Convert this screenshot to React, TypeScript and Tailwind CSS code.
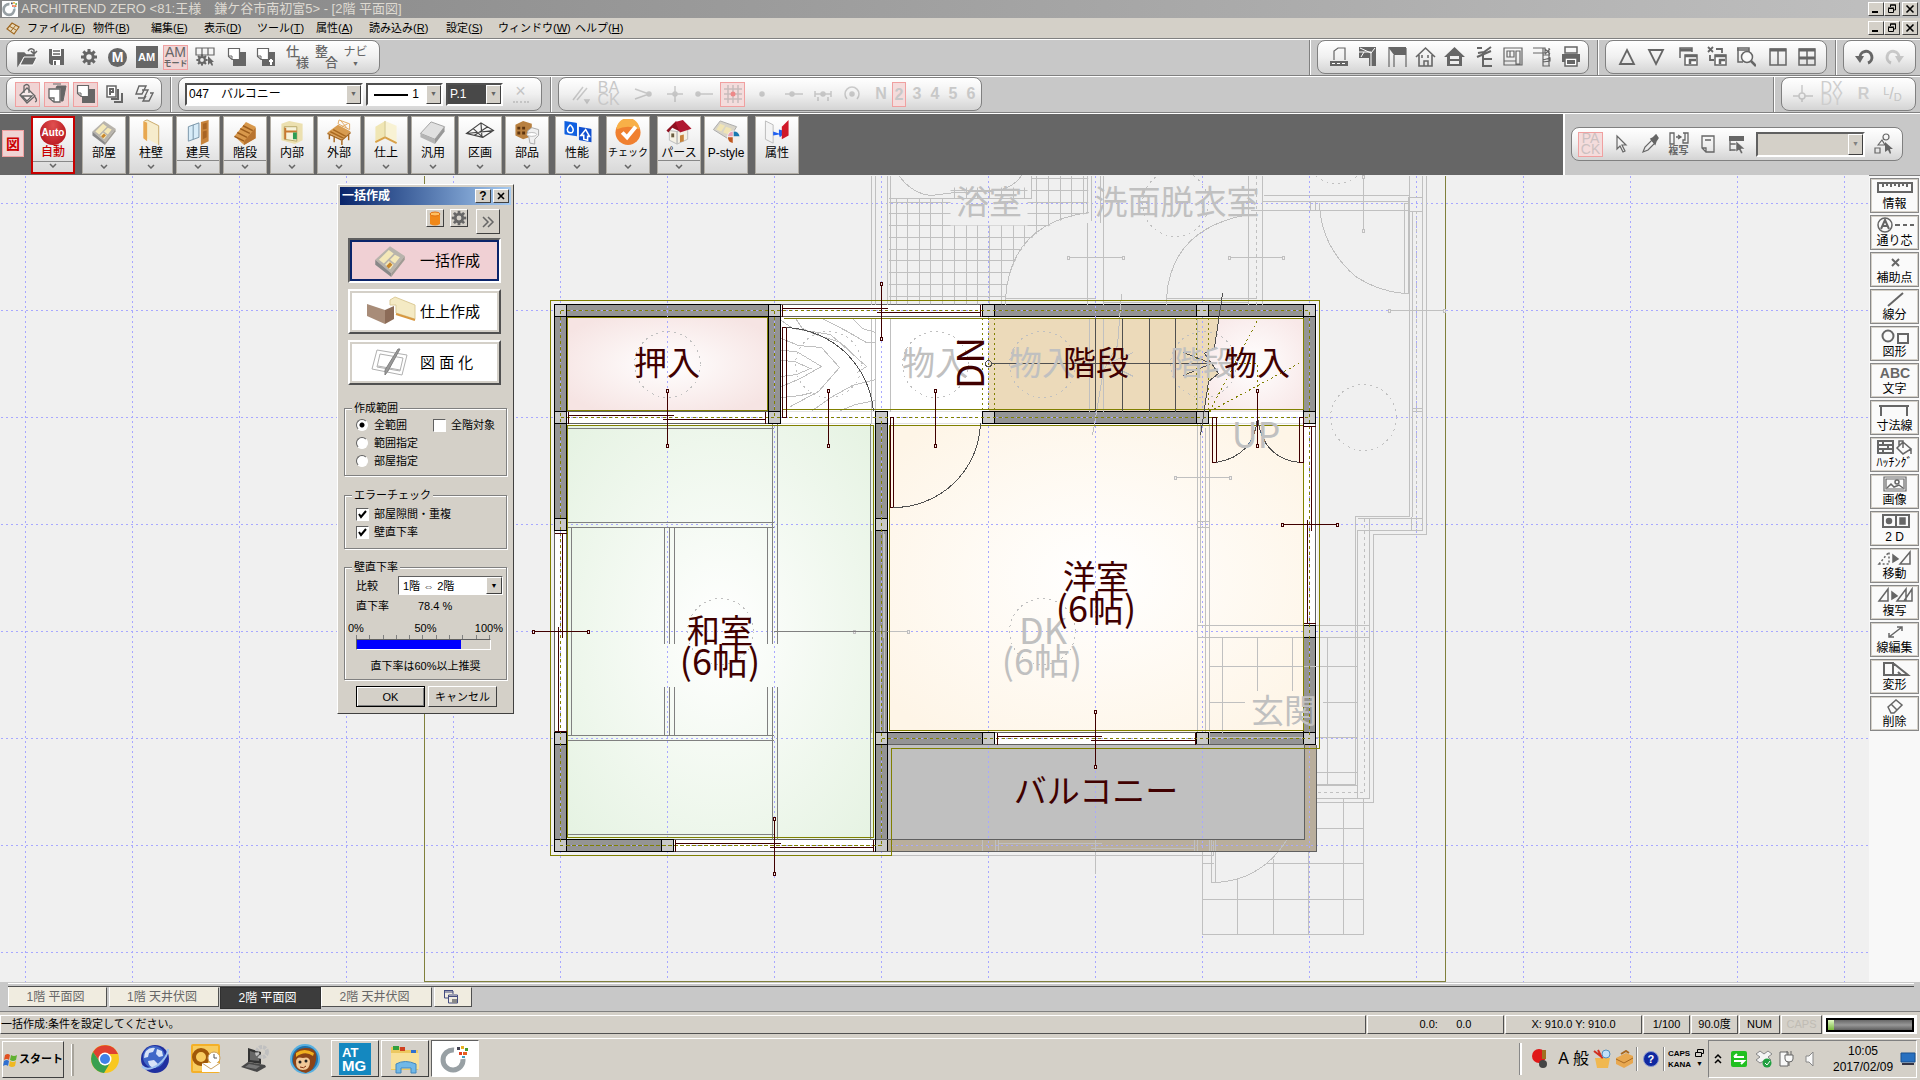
import React from "react";

type Kids = { children?: React.ReactNode };

/* ---------- shared bits ---------- */

const RAISED = "border border-t-white border-l-white border-r-[#404040] border-b-[#404040]";
const SUNKEN = "border border-t-[#606060] border-l-[#606060] border-r-white border-b-white";

function Svg({ w = 22, h = 22, children, className = "" }: Kids & { w?: number; h?: number; className?: string }) {
  return (
    <svg width={w} height={h} viewBox={`0 0 ${w} ${h}`} className={`shrink-0 ${className}`} fill="none" stroke="#666" strokeWidth="1.5" aria-hidden="true">
      {children}
    </svg>
  );
}

function Pill({ children, className = "" }: Kids & { className?: string }) {
  return (
    <div className={`flex h-[34px] items-center rounded-lg border border-[#808080] bg-linear-to-b from-white via-[#f0f0f0] to-[#d4d4d4] ${className}`}>
      {children}
    </div>
  );
}

function Tool({ label, children, on, faint }: Kids & { label: string; on?: boolean; faint?: boolean }) {
  return (
    <button
      aria-label={label}
      className={`flex w-[29px] shrink-0 justify-center ${faint ? "opacity-30" : ""}`}
    >
      <span className={`flex h-[25px] w-[25px] items-center justify-center ${on ? "border border-[#f0a0a0] bg-[#f0d4d4]" : ""}`}>{children}</span>
    </button>
  );
}

function Divider({ className = "" }: { className?: string }) {
  return <div className={`w-[2px] shrink-0 self-stretch border-l border-l-[#808080] bg-white ${className}`} />;
}

function Gap() {
  return <div className="w-[3px] shrink-0" />;
}

/* ---------- title and menu ---------- */

function WindowButtons() {
  const b = `flex h-[14px] w-4 items-center justify-center bg-[#d4d0c8] ${RAISED}`;
  return (
    <div className="ml-auto flex pr-[2px]">
      <button aria-label="最小化" className={b}>
        <svg width="10" height="10" aria-hidden="true"><path d="M1 8h6" stroke="#000" strokeWidth="2" /></svg>
      </button>
      <button aria-label="元に戻す" className={b}>
        <svg width="10" height="10" fill="none" stroke="#000" aria-hidden="true"><path d="M3.500 3V1h5v5H7M3 1h6" /><path d="M1.500 4.500h5v4h-5zM1 4h6" /></svg>
      </button>
      <button aria-label="閉じる" className={`ml-[2px] ${b}`}>
        <svg width="10" height="10" aria-hidden="true"><path d="M1.500 1.500l7 7M8.500 1.500l-7 7" stroke="#000" strokeWidth="1.600" /></svg>
      </button>
    </div>
  );
}

function AppMark({ size = 16 }: { size?: number }) {
  return (
    <svg width={size} height={size} viewBox="0 0 30 30" fill="none" aria-hidden="true" className="shrink-0">
      <path d="M14 6A10 10 0 1 0 23 15" stroke="#98a0a4" strokeWidth="5" />
      <path d="M17 3h3v3h-3z" fill="#445" /><path d="M21 2h3v3h-3z" fill="#e8b020" /><path d="M25 4h3v3h-3z" fill="#4a9a30" />
      <path d="M19 8h3v3h-3z" fill="#e04020" /><path d="M23 8h4v3h-4z" fill="#e86020" /><path d="M22 12h3v2h-3z" fill="#40a0c0" />
    </svg>
  );
}

const MENUS: [string, string, string][] = [
  ["ファイル", "F", "w-[66px]"], ["物件", "B", "w-[58px]"], ["編集", "E", "w-[53px]"], ["表示", "D", "w-[53px]"], ["ツール", "T", "w-[59px]"],
  ["属性", "A", "w-[53px]"], ["読み込み", "R", "w-[77px]"], ["設定", "S", "w-[52px]"], ["ウィンドウ", "W", "w-[77px]"], ["ヘルプ", "H", "w-[60px]"],
];

function TitleAndMenu() {
  return (
    <>
      <header className="flex h-[18px] items-center bg-linear-to-r from-[#848484] to-[#c0c0c0]">
        <span className="ml-[2px] flex h-4 w-4 bg-white"><AppMark /></span>
        <h1 className="ml-[3px] text-[13px] leading-4 whitespace-pre text-[#dedad2]">ARCHITREND ZERO &lt;81:王様　鎌ケ谷市南初富5&gt; - [2階 平面図]</h1>
        <WindowButtons />
      </header>
      <nav className="flex h-5 items-center bg-[#d4d0c8]">
        <Svg w={14} h={14} className="mr-[7px] ml-[6px]">
          <path d="M1 8L6 2l7 4-5 7z" fill="#e8d8b8" stroke="#a06820" strokeWidth="1.200" /><path d="M5 10l5-6M3 5l7 4" stroke="#a06820" strokeWidth="1" />
        </Svg>
        {MENUS.map(([name, key, w]) => (
          <button key={key} className={`text-left text-[11px] leading-4 whitespace-nowrap ${w}`}>
            {name}(<u>{key}</u>)
          </button>
        ))}
        <WindowButtons />
      </nav>
    </>
  );
}

/* ---------- toolbar rows ---------- */

function Pages({ pin }: { pin?: boolean }) {
  return (
    <Svg w={20} h={20}>
      <path d="M8 5h11v14H6v-6h2z" fill="#666" stroke="none" />
      <path d="M1.500 1.500h11v11H5l-3.500-3z" fill="#fff" strokeWidth="1.200" /><path d="M5 12V9H2" strokeWidth="1" />
      {pin && <path d="M15 12v6M13 14h4" stroke="#fff" strokeWidth="2" />}
    </Svg>
  );
}

function GearShape({ c = 9, s = 1 }: { c?: number; s?: number }) {
  return (
    <g transform={`translate(${c} ${c}) scale(${s})`} stroke="#666">
      <circle r="4.200" strokeWidth="3" />
      {[0, 45, 90, 135, 180, 225, 270, 315].map((a) => <path key={a} d="M0-5V-8" strokeWidth="3" transform={`rotate(${a})`} />)}
    </g>
  );
}

function RowOne() {
  return (
    <div className="flex h-[37px] items-start border-t border-b border-t-white border-b-[#808080] bg-[#c8c8c8]">
      <Pill className="ml-[6px] w-[374px] pl-[6px]">
        <Tool label="開く"><Svg><path d="M1 19V7h6l2 2h8v2H6z" fill="#666" /><path d="M3 19l4-8h13l-4 8z" fill="#666" stroke="#fff" strokeWidth="1" /><path d="M11 5q3-4 6-1v3M14 5l3 3 3-3" /></Svg></Tool>
        <Tool label="保存"><Svg w={18} h={18}><path d="M1 1h15v16H3l-2-2z" fill="#666" stroke="none" /><path d="M4 1h9v7H4zM5 12h7v5H5z" fill="#fff" stroke="none" /><path d="M5 3h7M5 6h7" /><path d="M6 13h2v4H6z" fill="#666" stroke="none" /></Svg></Tool>
        <Gap />
        <Tool label="設定"><Svg w={18} h={18}><GearShape /></Svg></Tool>
        <Tool label="M"><span className="flex h-[19px] w-[19px] items-center justify-center rounded-full bg-[#666] text-sm leading-none font-bold text-white">M</span></Tool>
        <Tool label="AM"><span className="flex h-[22px] w-[22px] items-center justify-center bg-[#666] text-[11px] font-bold text-white">AM</span></Tool>
        <Tool label="AMモード" on><span className="flex flex-col items-center text-[#666]"><b className="text-sm leading-3 font-normal">AM</b><b className="text-[8px] leading-[11px] font-bold whitespace-nowrap">モード</b></span></Tool>
        <Tool label="構成"><Svg w={20} h={20}><path d="M1 1h18v7H1zM7 1v7M13 1v7" strokeWidth="1.200" /><g transform="translate(1 7)"><GearShape c={6} s={0.700} /></g><path d="M13 10v9l2-2 2 3 1-1-1-3h2z" fill="#666" stroke="none" transform="translate(0 -1)" /></Svg></Tool>
        <Gap />
        <Tool label="ページ"><Pages /></Tool>
        <Tool label="ページ照明"><Pages pin /></Tool>
        <Gap />
        {[["仕", "様"], ["整", "合"]].map(([a, b]) => (
          <button key={a} className="flex w-[29px] shrink-0 flex-col px-[3px] text-[13px] leading-[11px] font-medium text-[#666]">
            <span className="self-start">{a}</span><span className="self-end">{b}</span>
          </button>
        ))}
        <button className="flex w-[29px] shrink-0 flex-col items-center text-xs leading-[13px] text-[#666]"><span>ナビ</span><span className="text-[7px] leading-[10px]">▼</span></button>
      </Pill>
      <Divider className="mr-[6px] ml-auto" />
      <Pill className="w-[272px] pl-[6px]">
        <Tool label="屋根"><Svg w={20}><path d="M5 14V5l4-3h7v12" strokeWidth="1.200" /><path d="M1 15h18v5H1z" fill="#666" stroke="none" /><path d="M3 17.500h14" stroke="#fff" strokeDasharray="3 2" strokeWidth="1" /></Svg></Tool>
        <Tool label="伏図"><Svg w={20}><path d="M1 1h17v19h-7v-8H1z" fill="#666" stroke="none" /><path d="M1 6h12v14M2 2l11 5 4-5M3 11l3-5" stroke="#fff" strokeWidth="1" /></Svg></Tool>
        <Tool label="軒"><Svg w={20}><path d="M1 1h18v8H7z" fill="#666" stroke="none" /><path d="M2 2v19M7 9v12M19 2v19" strokeWidth="1.200" /></Svg></Tool>
        <Tool label="立面図"><Svg><path d="M1 11l9.500-9L20 11M4 9v11h13V9" strokeWidth="1.600" /><path d="M9 20v-5h4v5M7 9v3M13 9v3" /></Svg></Tool>
        <Tool label="外観"><Svg><path d="M0 11L10.500 1 21 11h-3v9H3v-9z" fill="#666" stroke="none" /><path d="M6 10h9v3H6zM6 15h9v3H6z" fill="#eee" stroke="none" /></Svg></Tool>
        <Tool label="断面図"><Svg w={20}><path d="M3 2h5M4 7l6-1L17 1M3 11l14-6M9 6v15M9 13h9M9 20h9" strokeWidth="2" /></Svg></Tool>
        <Tool label="平面図"><Svg w={20}><path d="M1 2h18v17H1zM4 5h7v6H4zM7 5v6M13 5h4v13h-4zM1 15h12" strokeWidth="1.200" /></Svg></Tool>
        <Tool label="詳細図"><Svg w={20}><path d="M1 2h12v5H1M11 2v18M17 2v18M13 3l5 5M18 3l-5 5M11 9h7M11 14l7-2v3l-7 1v4h7" strokeWidth="1.200" /></Svg></Tool>
        <Tool label="印刷"><Svg w={20}><path d="M4 1h12v6H4z" strokeWidth="1.500" /><path d="M1 8h18v8H1z" fill="#666" stroke="none" /><path d="M4 12h12v8H4z" fill="#fff" strokeWidth="1.500" /><path d="M6 14h8v4H6z" fill="#666" stroke="none" /></Svg></Tool>
      </Pill>
      <Divider className="mr-[6px] ml-[8px]" />
      <Pill className="w-[222px] pl-[6px]">
        <Tool label="上へ"><Svg w={18}><path d="M9 4l7 14H2z" strokeWidth="1.800" /></Svg></Tool>
        <Tool label="下へ"><Svg w={18}><path d="M9 18l7-14H2z" strokeWidth="1.800" /></Svg></Tool>
        <Gap />
        <Tool label="ウィンドウ"><Svg w={20}><path d="M2 12V2h12v4" /><path d="M2 4h12" strokeWidth="3" /><path d="M7 9h12v10H7z" fill="#fff" /><path d="M7 10h12M12 18v-4h6" strokeWidth="2.500" /></Svg></Tool>
        <Tool label="閉じる"><Svg w={20}><path d="M1 1l5 5M6 1L1 6M9 3h6v4M3 9v5h4" strokeWidth="1.800" /><path d="M8 9h11v10H8z" fill="#fff" /><path d="M8 10h11M13 18v-4h5" strokeWidth="2.500" /></Svg></Tool>
        <Tool label="検索"><Svg w={20}><path d="M1 2h12v4M1 4h12M2 2v14h5" /><circle cx="11" cy="11" r="5.500" fill="#fff" fillOpacity=".6" /><path d="M15 15l5 5" strokeWidth="2.500" /></Svg></Tool>
        <Gap />
        <Tool label="左右分割"><Svg w={18} h={20}><path d="M1 2h16v16H1zM9 2v16" /><path d="M1 3h16" strokeWidth="3" /></Svg></Tool>
        <Tool label="四分割"><Svg w={18} h={20}><path d="M1 2h16v16H1zM9 2v16" /><path d="M1 3h16M1 11h16" strokeWidth="3" /></Svg></Tool>
      </Pill>
      <Divider className="mr-[6px] ml-[8px]" />
      <Pill className="mr-1 w-[73px] pl-[6px]">
        <Tool label="元に戻す"><Svg w={20}><path d="M5 12A6 6 0 1 1 13 17" strokeWidth="3" /><path d="M0 10h9l-4 7z" fill="#666" stroke="none" /></Svg></Tool>
        <Tool label="やり直し" faint><Svg w={20}><path d="M15 12A6 6 0 1 0 7 17" strokeWidth="3" /><path d="M20 10h-9l4 7z" fill="#666" stroke="none" /></Svg></Tool>
      </Pill>
    </div>
  );
}

function Drop({ label, width, value, dark, children }: Kids & { label: string; width: string; value: string; dark?: boolean }) {
  return (
    <span className={`relative flex h-[23px] border-2 border-t-[#505050] border-l-[#505050] border-r-white border-b-white ${width}`}>
      <select aria-label={label} className={`w-full appearance-none pl-[2px] text-xs leading-4 outline-none ${dark ? "bg-[#484848] pl-3 text-white" : "bg-white text-black"} ${children ? "text-right pr-[22px]" : ""}`}>
        <option>{value}</option>
      </select>
      {children}
      <span className={`pointer-events-none absolute inset-y-0 right-0 flex w-[15px] items-center justify-center bg-[#d4d0c8] text-[7px] text-[#666] ${RAISED}`}>▼</span>
    </span>
  );
}

function RowTwo() {
  return (
    <div className="flex h-[37px] items-start border-t border-b border-t-white border-b-[#808080] bg-[#c8c8c8]">
      <Pill className="ml-[6px] w-[156px] pl-[6px]">
        <Tool label="塗り" on><Svg w={20}><path d="M9 5l8 8-8 7-7-8z" fill="#fff" fillOpacity=".5" strokeWidth="1.300" /><path d="M6 10V3q3-3 5 0v7M4 13h10l-5 5zM17 14q3 4 0 5" strokeWidth="1.300" /></Svg></Tool>
        <Tool label="用紙" on><Svg w={20}><path d="M6 1h8M10 3h9l-3 15h-2V5h-5z" fill="#666" strokeWidth="1" /><path d="M2 6h11v13H7l-5-4z" fill="#fff" strokeWidth="1.300" /><path d="M7 19v-4H2" strokeWidth="1.300" /></Svg></Tool>
        <Tool label="ページ重ね" on><Pages /></Tool>
        <Tool label="部品"><Svg w={20} h={20}><path d="M2 2h9v11H2z" fill="#fff" /><path d="M5 11V5h3v3H5M13 5v10H6M17 9v9H9" strokeWidth="2" /></Svg></Tool>
        <Tool label="階層"><Svg w={20} h={20}><path d="M5 2h7l-4 8H2zM8 6h6l-4 8H4M16 9h3l-4 8H9l3-5" strokeWidth="1.400" /></Svg></Tool>
      </Pill>
      <Divider className="mr-[6px] ml-[8px]" />
      <Pill className="w-[364px] gap-[3px] px-[6px]">
        <Drop label="要素" width="w-[178px]" value="047　バルコニー" />
        <Drop label="線幅" width="w-[77px]" value="1"><span className="pointer-events-none absolute top-[9px] left-[6px] h-[2px] w-[34px] bg-black" /></Drop>
        <Drop label="ペン" width="w-[57px]" value="P.1" dark />
        <button aria-label="解除" className="flex flex-1 flex-col items-center text-lg leading-3 text-[#c4c4c4]">×<span className="mt-1 w-4 border-t-2 border-dotted border-[#c4c4c4]" /></button>
      </Pill>
      <Divider className="mr-[6px] ml-[8px]" />
      <Pill className="w-[424px] pl-[6px]">
        <Tool label="平行" faint><Svg w={20}><path d="M3 17L13 4M7 17L17 5M15 17h4l-2 3z" /></Svg></Tool>
        <button className="flex w-[29px] shrink-0 flex-col items-center text-base leading-3 text-[#c8c8c8]"><span>BA</span><span>CK</span></button>
        <span className="w-[5px] shrink-0" />
        <Tool label="端点" faint><Svg w={20}><path d="M2 6l14 5L2 16" /><circle cx="16" cy="11" r="2" fill="#666" /></Svg></Tool>
        <Gap />
        <Tool label="交点" faint><Svg w={20}><path d="M2 11h16M10 3v16" /><circle cx="10" cy="11" r="2" fill="#666" /></Svg></Tool>
        <Tool label="線端" faint><Svg w={20}><path d="M4 11h15" /><circle cx="4" cy="11" r="2" fill="#666" /></Svg></Tool>
        <button aria-label="グリッド" className="flex w-[29px] shrink-0 justify-center">
          <span className="flex h-[25px] w-[25px] items-center justify-center border border-[#f0a0a0] bg-[#f4dcdc]">
            <Svg w={20} h={20}><path d="M5 1v18M10 1v18M15 1v18M1 5h18M1 10h18M1 15h18" stroke="#c8bcbc" /><circle cx="10" cy="10" r="2.500" fill="#e88" stroke="none" /></Svg>
          </span>
        </button>
        <Tool label="点" faint><Svg w={20}><circle cx="10" cy="11" r="2" fill="#666" /></Svg></Tool>
        <Gap />
        <Tool label="中点" faint><Svg w={20}><path d="M1 11h18" /><circle cx="8" cy="11" r="2" fill="#666" /></Svg></Tool>
        <Tool label="間隔" faint><Svg w={20}><path d="M2 8v6M18 8v6M2 11h16M5 14v4M15 14v4" /><circle cx="10" cy="11" r="2" fill="#666" /></Svg></Tool>
        <Tool label="中心" faint><Svg w={20}><path d="M5 16A7 7 0 1 1 15 16" /><circle cx="10" cy="11" r="2" fill="#666" /></Svg></Tool>
        <div className="ml-2 flex gap-1 text-base font-bold text-[#c8c8c8]">
          {["N", "2", "3", "4", "5", "6"].map((n) => (
            <button key={n} className={`h-[25px] w-[14px] ${n === "2" ? "border border-[#f0a0a0] bg-[#f4dcdc]" : ""}`}>{n}</button>
          ))}
        </div>
      </Pill>
      <Divider className="mr-[6px] ml-auto" />
      <Pill className="mr-1 w-[135px] pl-[6px]">
        <Tool label="座標" faint><Svg w={20}><circle cx="9" cy="13" r="3" /><path d="M9 2v8M0 13h6M12 13h8M9 16v3" /></Svg></Tool>
        <button className="flex w-[29px] flex-col items-center text-base leading-3 text-[#cdcdcd]"><span>DX</span><span>DY</span></button>
        <Gap />
        <button className="w-[29px] text-base font-bold text-[#cdcdcd]">R</button>
        <button className="flex w-[29px] items-center justify-center text-[11px] leading-4 text-[#c4c4c4]"><span className="pb-[6px]">L</span><span className="text-base">/</span><span className="pt-[6px]">D</span></button>
      </Pill>
    </div>
  );
}

/* ---------- ribbon ---------- */

const ART: Record<string, React.ReactNode> = {
  room: <><path d="M3 13L15 2l12 8-11 14z" fill="#b8b4ac" /><path d="M6 13l8-8 4 3-8 8zM15 4l4 3M19 9l4 2-4 5-4-3zM11 17l3-3 4 3-3 4z" fill="#f4e8b8" /><path d="M12 18l3-3 2 2-3 3z" fill="#c8862c" /><path d="M3 13v4l13 10v-3z" fill="#888" /><path d="M27 10v3L16 27v-3z" fill="#a09c94" /></>,
  pillar: <><path d="M8 2l3-1 12 6v20L10 20z" fill="#f6eccc" /><path d="M7 2l4 2v19l-4-3z" fill="#e8a850" /><path d="M8 2l3-1 12 6v20" fill="none" stroke="#c8a868" /></>,
  joinery: <><path d="M5 8l11-4v15L5 23z" fill="#d8ecf8" stroke="#7894a8" /><path d="M10 6v15" stroke="#7894a8" /><path d="M18 3l8-2v22l-8 4z" fill="#c8843c" /><path d="M20 5l4-1v6l-4 1zM20 13l4-1v7l-4 2z" fill="#a86424" /></>,
  stairs: <><path d="M4 18L16 3l10 5v12L14 27z" fill="#d8984c" /><path d="M4 18l10 5M7 14l10 5M10 10l10 5M13 7l10 5" stroke="#9c5c1c" strokeWidth="1.500" /><path d="M14 23l12-14v11L14 27z" fill="#b87430" /></>,
  inner: <><path d="M4 5l8-3 14 3v17l-8 4-14-4z" fill="#ece0b0" /><path d="M7 8h13v15l-13-2z" fill="#f6f2da" stroke="#b8a868" /><path d="M8 13h12M8 9v12" stroke="#c87830" strokeWidth="2" /><path d="M16 14h4v7h-4z" fill="#2c9c54" /></>,
  outer: <><path d="M3 14L14 6l13 7-9 8z" fill="#d89c50" /><path d="M3 15l15 7 9-8M5 15v6M10 18v6M18 22v5M25 15v7M6 13l14 7M9 11l13 7" stroke="#a86820" strokeWidth="1.500" fill="none" /><path d="M14 5l12 6V5L15 1zM17 2l6 7M24 5l-6 3" stroke="#e0a860" fill="none" /></>,
  finish: <><path d="M4 8l10-6v17L4 25z" fill="#f0e6b4" /><path d="M14 2l12 5v18l-12-6z" fill="#f8f2d4" /><path d="M4 24l10-5 12 6" stroke="#d8a048" strokeWidth="2" fill="none" /><path d="M14 2v17" stroke="#cfc48c" /></>,
  general: <><path d="M2 15L13 3l14 5-10 13z" fill="#e0e0e0" stroke="#a0a0a0" /><path d="M2 15v4l15 7v-5z" fill="#b4b4b4" /><path d="M27 8v5L17 26v-5z" fill="#989898" /></>,
  area: <g fill="none" stroke="#444" strokeWidth="1.200"><path d="M1 15L16 4l13 8-11 7zM8 10l10 9M9 17L23 8M1 15l17 4M16 4l1 15M1 15l28-3" /></g>,
  parts: <><path d="M3 6l8-4 9 3v13l-9 3-8-4z" fill="#b88040" /><path d="M5 8h3v3H5zM10 8h3v3h-3zM5 13h3v3H5zM10 13h3v3h-3z" fill="#5c3410" /><path d="M16 12l4-3 7 2v6l-4 4v5l-5-1-1-6q-3-4-1-7z" fill="#f0f0f0" stroke="#aaa" /><ellipse cx="20" cy="16" rx="5" ry="2" fill="#fff" stroke="#bbb" /></>,
  perf: <><path d="M2 2l12 2q1 0 1 1v13l-12-2q-1 0-1-1z" fill="#1060e0" /><path d="M17 8l12 2q1 0 1 1v13l-12-2q-1 0-1-1z" fill="#1050d0" /><path d="M8 6q5 5 2 8-5 1-5-3 0-2 3-5M19 17l5-6 4 7h-2v4l-4-1v-4z" fill="none" stroke="#fff" strokeWidth="1.600" /></>,
  check: <><circle cx="15" cy="14" r="13" fill="#f08030" /><path d="M3 11a12 12 0 0 1 24 0q-12-6-24 0" fill="#f8b048" /><path d="M9 14l5 5 9-11" fill="none" stroke="#fff" strokeWidth="4" /></>,
  pers: <><path d="M5 12l8 1v13l-8-4zM13 13l11-3v11l-11 5z" fill="#f4f0e4" stroke="#bbb" /><path d="M2 12L12 2l4 11-8-4-4 5z" fill="#901020" /><path d="M11 3l8-2 9 9-12 4z" fill="#b01830" /><path d="M16 17l4-1v7l-4 1z" fill="#c8843c" /><path d="M7 15h3v4H7z" fill="#6a5c40" /></>,
  pstyle: <><path d="M2 11L9 2l17 6-8 13z" fill="#d8d4c8" stroke="#aaa" /><path d="M5 11l4-6 5 2-4 6zM15 8l6 2-3 6-6-2z" fill="#f0e4b4" /><circle cx="23" cy="19" r="7" fill="#f0eeec" /><path d="M23 18v-5a6 6 0 0 1 6 5z" fill="#1878b0" /><path d="M22 19v6a6 6 0 0 1-5-6z" fill="#c05820" /><path d="M22 18h-5a6 6 0 0 1 5-5z" fill="#e8a0b8" /></>,
  attr: <><path d="M3 2l8 4v19l-8-4z" fill="#f4f4f4" stroke="#bbb" /><path d="M11 13l6 2v-4l8 2-7 6-1-3-6 1z" fill="#2060f0" /><path d="M20 8l7-7v16l-7 4z" fill="#d01828" /></>,
};

const RIBBON: [string, string, string, boolean, boolean][] = [
  ["部屋", "room", "ml-[7px]", false, true], ["柱壁", "pillar", "ml-[3px]", false, true], ["建具", "joinery", "ml-[3px]", true, true], ["階段", "stairs", "ml-[3px]", true, true],
  ["内部", "inner", "ml-[3px]", false, true], ["外部", "outer", "ml-[3px]", false, true], ["仕上", "finish", "ml-[3px]", false, true], ["汎用", "general", "ml-[3px]", false, true],
  ["区画", "area", "ml-[3px]", false, true], ["部品", "parts", "ml-[3px]", false, true], ["性能", "perf", "ml-[6px]", false, true], ["チェック", "check", "ml-[7px]", false, true],
  ["パース", "pers", "ml-[7px]", true, true], ["P-style", "pstyle", "ml-[3px]", false, false], ["属性", "attr", "ml-[7px]", false, false],
];

function Chevron() {
  return <svg width="8" height="5" fill="none" stroke="#666" strokeWidth="1.500" className="absolute bottom-[4px]" aria-hidden="true"><path d="M1 1l3 3 3-3" /></svg>;
}

function Ribbon() {
  const card = "relative flex h-[58px] w-11 shrink-0 flex-col items-center bg-linear-to-b from-white via-[#eeeeee] to-[#d8d8d8]";
  return (
    <div className="flex h-[62px] border-t border-t-white bg-[#666]">
      <div className="flex pt-[2px]">
        <button className="mt-[14px] ml-[2px] flex h-[27px] w-[22px] items-center justify-center border border-[#f0a0a0] bg-[#f0d4d4] text-sm font-bold text-[#c00]">図</button>
        <button className={`${card} ml-[7px] border-2 border-[#c80000]`}>
          <span className="mt-[2px] flex h-[25px] w-[26px] items-center justify-center rounded-full bg-radial-[at_50%_20%] from-[#e05050] to-[#b00c14] text-[10px] font-bold text-white">Auto</span>
          <span className="text-xs leading-[15px] font-medium text-[#c80000]">自動</span>
          <span className="mt-px w-full border-t border-[#888]" />
          <Chevron />
        </button>
        {RIBBON.map(([label, art, ml, split, menu]) => (
          <button key={label} className={`${card} ${ml} border border-[#b0aca4] pt-[2px]`}>
            <svg width="30" height="27" viewBox="0 0 30 28" aria-hidden="true">{ART[art]}</svg>
            <span className={`whitespace-nowrap ${label.length === 4 ? "text-[10px] leading-[14px]" : "text-xs leading-[14px]"}`}>{label}</span>
            {split && <span className="w-full border-t border-[#888]" />}
            {menu && <Chevron />}
          </button>
        ))}
      </div>
      <div className="ml-auto flex w-[357px] border-l-2 border-l-white bg-[#c8c8c8] pt-[13px] pl-[6px]">
        <Pill className="w-[332px] pl-[6px]">
          <button className="flex h-[25px] w-[25px] flex-col items-center justify-center border border-[#f0a0a0] bg-[#f4dcdc] text-sm leading-[11px] text-[#ccc0c0]"><span>PA</span><span>CK</span></button>
          <Gap />
          <Tool label="選択"><Svg w={14} h={20}><path d="M3 2v13l3-3 3 6 2-1-3-6h4z" strokeWidth="1.200" /></Svg></Tool>
          <Tool label="スポイト"><Svg w={18} h={20}><path d="M2 18l2-5 7-7 3 3-7 7z" strokeWidth="1.200" /><path d="M10 5l2-1 3-3 2 3-2 3-1 3z" fill="#666" /></Svg></Tool>
          <button className="flex w-[29px] flex-col items-center text-[10px] leading-[11px] font-bold text-[#666]">
            <Svg w={22} h={13}><path d="M2 1h4v11H2zM15 1h5v10h-5v-3h2V1M8 5h5M10 3l3 2-3 2" strokeWidth="1.300" /></Svg><span>複写</span>
          </button>
          <Tool label="メモ"><Svg w={16} h={20}><path d="M2 2h12v16H6l-4-4zM5 6h6M2 14h4v4" strokeWidth="1.300" /></Svg></Tool>
          <Tool label="一覧"><Svg w={18} h={20}><path d="M1 2h15v5H1z" fill="#666" stroke="none" /><path d="M2 2v15M2 10h6M2 16h6" strokeWidth="1.300" /><path d="M8 7v11l3-2 2 4 2-1-2-4h4z" fill="#666" stroke="#fff" strokeWidth=".5" /></Svg></Tool>
          <span className="relative ml-[5px] flex h-[25px] w-[109px] border-2 border-t-[#606060] border-l-[#606060] border-r-white border-b-white">
            <select aria-label="選択条件" className="w-full appearance-none bg-[#d4d0c8] outline-none"><option></option></select>
            <span className={`pointer-events-none absolute inset-y-0 right-0 flex w-[15px] items-center justify-center bg-[#d4d0c8] text-[7px] text-[#808080] ${RAISED}`}>▼</span>
          </span>
          <span className="ml-1"><Tool label="図形選択"><Svg w={20} h={22}><circle cx="12" cy="4" r="3" strokeWidth="1.200" /><path d="M4 12l4-5 3 5zM1 15h5v5H1z" strokeWidth="1.200" /><path d="M11 9v10l3-2 2 4 1-1-1-4h3z" fill="#666" stroke="none" /></Svg></Tool></span>
        </Pill>
      </div>
    </div>
  );
}

/* ---------- drawing ---------- */

const GREY = "#c0c0c0";
const WINE = "#400000";
const OLIVE = "#808000";

function Txt({ x, y, s, under, size = 33 }: { x: number; y: number; s: string; under?: boolean; size?: number }) {
  return <text x={x} y={y} textAnchor="middle" fontSize={size} fill={under ? GREY : WINE} stroke="none">{s}</text>;
}

function Marks({ list, color }: { list: number[][]; color: string }) {
  return (
    <g stroke={color} fill="none">
      {list.map(([x1, y1, x2, y2], i) => (
        <g key={i}>
          <path d={`M${x1} ${y1}L${x2} ${y2}`} />
          <rect x={x1 - 1} y={y1 - 1} width="2" height="3" fill="#f4f0f0" /><rect x={x2 - 1} y={y2 - 1} width="2" height="3" fill="#f4f0f0" />
        </g>
      ))}
    </g>
  );
}

const WALLS = [
  [566, 304, 202, 12], [994, 304, 202, 12], [1208, 304, 95, 12], [554, 316, 12, 202], [554, 744, 12, 95], [768, 316, 12, 95],
  [994, 411, 202, 12], [875, 423, 12, 95], [875, 530, 12, 202], [875, 744, 12, 95], [1303, 316, 12, 95], [1303, 637, 12, 95],
  [887, 732, 95, 12], [1208, 732, 95, 12], [566, 839, 95, 12],
];
const OPENINGS = [[780, 304, 202, 12], [566, 411, 202, 12], [780, 411, 95, 12], [887, 411, 95, 12], [1208, 411, 95, 12], [554, 530, 12, 202], [1303, 423, 12, 202], [994, 732, 202, 12], [673, 839, 202, 12]];
const POSTS = [
  [554, 304], [768, 304], [982, 304], [1196, 304], [1303, 304], [554, 411], [768, 411], [875, 411], [982, 411], [1196, 411], [1303, 411],
  [554, 518], [875, 518], [1303, 625], [554, 732], [875, 732], [982, 732], [1196, 732], [1303, 732], [554, 839], [661, 839], [875, 839],
];
const TILE_X = [890, 896, 907, 919, 930, 942, 954, 966, 977, 989, 1001, 1013, 1024, 1036, 1048, 1060, 1071, 1083];
const TILE_Y = [178, 190, 202, 213, 225, 237, 249, 260, 272, 284, 296];

function FloorPlan() {
  return (
    <svg className="block h-full w-full" viewBox="0 175 1869 807" preserveAspectRatio="xMinYMin slice" fill="none" fontFamily="'Noto Sans CJK JP', sans-serif" role="img" aria-label="2階 平面図">
      <defs>
        <radialGradient id="pink" r=".6"><stop offset="0" stopColor="#fff" /><stop offset="1" stopColor="#f6e4e3" /></radialGradient>
        <radialGradient id="rose" r=".62"><stop offset="0" stopColor="#fff" /><stop offset="1" stopColor="#f8e8e8" /></radialGradient>
        <radialGradient id="green" r=".68"><stop offset="0" stopColor="#fff" /><stop offset="1" stopColor="#e6f3e3" /></radialGradient>
        <radialGradient id="cream" r=".64"><stop offset="0" stopColor="#fff" /><stop offset="1" stopColor="#fef5e7" /></radialGradient>
        <clipPath id="tiles"><path clipRule="evenodd" d="M888 198H1031V175H1088V213Q1008 225 1005 304H888ZM950 187H1027V225H950Z" /></clipPath>
      </defs>
      <g transform="translate(.5 .5)" shapeRendering="crispEdges">
        {/* rooms */}
        <rect x="554" y="304" width="762" height="440" fill="#fff" /><rect x="554" y="740" width="333" height="111" fill="#fff" />
        <rect x="567" y="317" width="200" height="94" fill="url(#pink)" />
        <rect x="1204" y="317" width="99" height="94" fill="url(#rose)" />
        <path d="M988 317H1218L1214 347 1204 353 1218 373 1208 381 1203 411H988Z" fill="#ecdaba" />
        <rect x="567" y="424" width="307" height="414" fill="url(#green)" />
        <rect x="888" y="424" width="415" height="307" fill="url(#cream)" />
        <rect x="887" y="744" width="429" height="107" fill="#b9ae9c" /><rect x="887" y="744" width="417" height="95" fill="#c0c0c0" />

        {WALLS.map((r, i) => <rect key={i} x={r[0]} y={r[1]} width={r[2]} height={r[3]} fill="#949494" stroke="#000" />)}
        {OPENINGS.map((r, i) => <rect key={i} x={r[0]} y={r[1]} width={r[2]} height={r[3]} fill="#fff" stroke={i === 2 || i === 3 || i === 4 ? "#e0e0e0" : "#606060"} />)}

        {/* grid */}
        <g stroke="#a8a8ff" strokeDasharray="2 3">
          {[25, 132, 239, 346, 453, 560, 667, 774, 881, 988, 1095, 1202, 1309, 1416, 1523, 1630, 1737, 1844].map((x) => <path key={x} d={`M${x} 175V981`} />)}
          {[203, 310, 417, 524, 631, 738, 845, 952].map((y) => <path key={y} d={`M0 ${y}H1869`} />)}
        </g>
        <path d="M424 175V981H1445V175" stroke="#80803c" />

        {/* lower storey */}
        <g stroke={GREY}>
          <path d="M871 175V304M875 175V304M887 175V304M890 175V300M1087 175V212M1091 175V220M1100 175V222M1103 175V304M1087 222V304M1248 175V304M1262 175V304M1409 175V516M1412 210V516M1422 175V530M1426 175V534" />
          <path d="M1031 175V198H888M1263 195H1409M1262 201H1409M1250 210H1409M1310 201V210M1315 201V210M1408 197H1422V211H1408Z" />
          <path d="M899 176Q912 193 930 195L955 192 980 191Q1010 192 1021 175" />
          <g clipPath="url(#tiles)">
            {TILE_X.map((x) => <path key={x} d={`M${x} 175V304`} />)}
            {TILE_Y.map((y) => <path key={y} d={`M888 ${y}H1089`} />)}
          </g>
          <path d="M1005 304V298H1095M1005 298Q1010 222 1089 212M1166 304V298H1256M1166 298Q1170 228 1248 214M1103 302H1248" />
          <path d="M1404 203H1408V293H1404ZM1319 203Q1320 245 1355 276 1378 291 1404 293M890 300H1103" />
          <path d="M1409 516H1355V784H1316M1422 530H1357V798M1426 534H1373V802H1316M1411 516V530M1369 518V798H1316M1422 518H1357" />
          <path d="M1197 423V745M1200 423V622M1205 427V745M1209 423V745M1197 521H1209M1197 527H1209M1197 625H1369M1197 637H1369" />
          <path d="M1222 637V732M1257 637V690M1292 637V690M1327 637V784M1209 666H1357M1209 702H1244M1322 702H1357M1209 737H1357M1316 772H1357M1316 785H1357M1411 408H1422M1411 411H1422" />
          <path d="M1202 851V934H1363V798M1237 878V934M1273 858V934M1308 851V934M1343 798V934M1316 828H1363M1202 863H1213M1265 863H1363M1202 899H1363M891 855H1213V840M1211 839V882H1215V839M1215 882Q1260 880 1286 840" />
          <path d="M982 839V851M995 839V851M998 839V851M1194 839V851M1197 839V851M1209 839V851M998 843H1101M1090 848H1194M871 530V732M884 533V732M880 625V732M883 530V637" />
          <path d="M890 317V411M871 317V423M875 317V423M1089 317V411M1103 317V411M1121 294L1117 345 1103 370 1098 400 1092 435M1107 363L1133 352M1107 363L1133 376M1197 317V411" />
          <path d="M781 320L792 328 830 334 866 366 857 372M795 318L802 328 815 334 840 342 852 353M822 318L845 330 866 342H875M852 318L862 328 875 332M781 338L798 345 821 347 839 367 818 391 790 406M781 350L796 351 821 366 800 378 781 386M781 360L794 361 810 368 796 374 781 376M781 397L800 395 812 392M812 410L832 396 852 385 875 379M840 410L855 404 875 400" />
          <g strokeDasharray="2 4">
            {[[667, 364], [828, 364], [935, 364], [1042, 364], [1203, 364], [1363, 417], [720, 631], [1042, 631], [1175, 203]].map(([x, y], i) => <circle key={i} cx={x} cy={y} r="33" />)}
            <circle cx="1336" cy="150" r="33" />
          </g>
          <path d="M1364 518V792H1316M1256 175V304M1416 210V530" strokeDasharray="3 3" />
        </g>
        <Marks color={GREY} list={[[1068, 257, 1123, 257], [1229, 257, 1283, 257], [1389, 310, 1444, 310], [1175, 477, 1230, 477], [1363, 176, 1363, 230], [854, 631, 908, 631]]} />
        <path d="M1095 839V873" stroke={GREY} />

        {/* tatami */}
        <g stroke="#808080">
          <path d="M567 428H773M567 522H773M567 527H773M567 735H773M567 740H773M567 834H773M870 423V838" />
          <path d="M571 527V735M664 527V643M664 686V735M669 527V643M669 686V735M674 527V643M674 686V735M767 527V643M767 686V735M772 423V643M772 686V839M777 423V643M777 686V839" />
          <path d="M773 631H887" />
        </g>

        {POSTS.map(([x, y]) => <rect key={`${x}-${y}`} x={x} y={y} width="12" height="12" fill="#c8c8c8" stroke="#000" />)}
        <path d="M887 744H1304V839H875M1316 744V851H875" stroke="#606060" />
        <g stroke={OLIVE}>
          <path d="M550 300H1319V748H891V855H550Z" />
          <path d="M567 317H767V410H567ZM783 318H982M782 409H1303V318H982M1303 318V409M567 425H873V837H567ZM889 425H1303V730H889Z" />
          <path d="M560 310H1309V738H881M560 310V845H881V417M560 417H1309M774 310V417M566 845H881" strokeDasharray="3 3" />
          <path d="M982 317V411M988 317V411M994 317V411M1196 317V411M1208 317V411M1209 411L1258 318M1209 411L1302 361M1218 363H1257V411" strokeDasharray="2 3" />
        </g>

        {/* windows, doors and stairs */}
        <path
          d="M782 304V316M980 304V316M782 308H887M876 312H980M568 411V423M765 411V423M568 415H673M662 419H765M554 533H566M562 533V637M558 626V731M554 731H566M675 839V851M873 839V851M675 843H780M769 847H873M997 732V744M1195 732V744M997 736H1101M1090 740H1195M1303 426H1315M1311 426V530M1307 519V623M1303 623H1315M782 327H786V417H782ZM890 417H893V507H890ZM1212 417H1216V462H1212ZM1299 417H1303V462H1299Z"
          stroke={WINE}
        />
        <g stroke="#505050">
          <path d="M786 327Q820 329 845 352 870 377 873 411M893 507A87 87 0 0 0 980 423M1216 462Q1254 455 1257 417Q1262 458 1299 462" />
          <path d="M1095 317V411M1122 317V411M1149 317V411M1175 317V411M991 363H1211M1183 352L1211 363 1183 375M1222 293L1214 347 1204 353 1218 373 1208 381 1200 435" />
          <circle cx="988" cy="363" r="3" />
        </g>
        <Marks color={WINE} list={[[667, 390, 667, 445], [828, 390, 828, 445], [935, 390, 935, 445], [881, 283, 881, 338], [1257, 390, 1257, 445], [1095, 711, 1095, 766], [774, 818, 774, 873], [533, 631, 588, 631], [1282, 524, 1337, 524]]} />
      </g>

      <Txt under x={989} y={214} s="浴室" /><Txt under x={1177} y={214} s="洗面脱衣室" />
      <Txt under x={935} y={375} s="物入" /><Txt under x={1042} y={375} s="物入" /><Txt under x={1203} y={375} s="階段" />
      <Txt under x={1256} y={448} s="UP" size={36} /><Txt under x={1043} y={644} s="DK" size={36} /><Txt under x={1042} y={675} s="(6帖)" size={36} />
      <Txt under x={1284} y={723} s="玄関" />
      <Txt x={667} y={375} s="押入" /><Txt x={1096} y={375} s="階段" /><Txt x={1257} y={375} s="物入" />
      <Txt x={720} y={643} s="和室" /><Txt x={720} y={675} s="(6帖)" size={36} />
      <Txt x={1096} y={589} s="洋室" /><Txt x={1096} y={622} s="(6帖)" size={36} />
      <Txt x={1096} y={803} s="バルコニー" />
      <text transform="translate(984 363) rotate(-90)" textAnchor="middle" fontSize="37" fill={WINE}>DN</text>
    </svg>
  );
}

/* ---------- dialog ---------- */

function Group({ title, className = "", children }: Kids & { title: string; className?: string }) {
  return (
    <fieldset className={`border border-[#808080] px-[11px] shadow-[1px_1px_0_#fff,inset_1px_1px_0_#fff] ${className}`}>
      <legend className="-ml-1 bg-[#d4d0c8] px-[2px] leading-3">{title}</legend>
      {children}
    </fieldset>
  );
}

function Radio({ label, checked }: { label: string; checked?: boolean }) {
  return (
    <label className="flex h-[18px] items-center gap-[6px]">
      <input type="radio" name="range" defaultChecked={checked} className={`h-3 w-3 appearance-none rounded-full bg-white checked:bg-[radial-gradient(#000_0_2px,#fff_3px)] ${SUNKEN}`} />
      {label}
    </label>
  );
}

function Check({ label, checked }: { label: string; checked?: boolean }) {
  return (
    <label className="relative flex h-[18px] items-center gap-[5px]">
      <input type="checkbox" defaultChecked={checked} className={`peer h-[13px] w-[13px] appearance-none bg-white ${SUNKEN}`} />
      <svg width="9" height="9" className="pointer-events-none absolute left-[2px] hidden peer-checked:block" fill="none" stroke="#000" strokeWidth="2" aria-hidden="true"><path d="M1 4l2 3 5-6" /></svg>
      {label}
    </label>
  );
}

function Dialog() {
  const big = "flex h-[45px] w-full items-center border-2 pl-4 text-[15px]";
  const rest = "border-t-white border-l-white border-r-[#505050] border-b-[#505050] bg-white shadow-[inset_0_0_0_2px_#d4d0c8]";
  return (
    <section aria-label="一括作成" className={`absolute top-[9px] left-[337px] flex w-[177px] flex-col bg-[#d4d0c8] p-[2px] text-[11px] leading-[14px] ${RAISED}`}>
      <div className="flex h-[18px] items-center bg-linear-to-r from-[#0a246a] to-[#a6caf0] pl-[2px]">
        <h2 className="text-xs font-bold text-white">一括作成</h2>
        <button aria-label="ヘルプ" className={`ml-auto h-[14px] w-4 bg-[#d4d0c8] text-xs leading-3 font-bold ${RAISED}`}>?</button>
        <button aria-label="閉じる" className={`mr-[2px] ml-[2px] flex h-[14px] w-4 items-center justify-center bg-[#d4d0c8] ${RAISED}`}>
          <svg width="8" height="8" stroke="#000" strokeWidth="1.600" aria-hidden="true"><path d="M1 1l6 6M7 1L1 7" /></svg>
        </button>
      </div>
      <div className="mt-1 flex h-[25px] items-start justify-end gap-[6px] pr-[11px]">
        <button aria-label="データ" className={`flex h-[18px] w-[18px] items-center justify-center ${RAISED}`}>
          <svg width="14" height="15" aria-hidden="true"><path d="M2 3v10q5 3 10 0V3" fill="#f08818" /><ellipse cx="7" cy="3" rx="5" ry="2" fill="#ffc060" stroke="#e07010" /></svg>
        </button>
        <button aria-label="設定" className={`flex h-[18px] w-[18px] items-center justify-center ${RAISED}`}><Svg w={16} h={16}><GearShape c={8} s={0.900} /></Svg></button>
        <button aria-label="展開" className={`ml-[2px] flex h-[25px] w-6 items-center justify-center ${RAISED}`}><Svg w={14} h={12}><path d="M2 1l5 5-5 5M7 1l5 5-5 5" /></Svg></button>
      </div>
      <div className="mt-1 flex flex-col gap-[6px] pr-[10px] pl-2">
        <button className={`${big} border-t-[#606060] border-l-[#606060] border-r-white border-b-white bg-[#f0d0d4] shadow-[inset_0_0_0_2px_#0a246a]`}>
          <svg width="48" height="32" viewBox="0 1 30 26" preserveAspectRatio="xMidYMid meet" aria-hidden="true">{ART.room}</svg><span className="ml-[6px]">一括作成</span>
        </button>
        <button className={`${big} ${rest}`}>
          <svg width="50" height="32" viewBox="0 0 50 32" aria-hidden="true"><path d="M1 8l18 6v14L1 20z" fill="#a88c78" /><path d="M19 14l9-4v13l-9 5z" fill="#8c6c58" /><path d="M24 9V4l5-3 20 8v14l-19-6V9z" fill="#f4eac4" stroke="#dccb98" /><path d="M30 18l19 6" stroke="#d89840" strokeWidth="2" /></svg><span className="ml-1">仕上作成</span>
        </button>
        <button className={`${big} ${rest}`}>
          <svg width="48" height="32" viewBox="0 0 48 32" fill="none" stroke="#b0b0b0" aria-hidden="true"><path d="M11 3l30 5-5 20-30-6zM14 7l23 4-3 13-23-4zM12 19l22 4" /><path d="M34 2L22 24l-3 4 0-5L32 2z" fill="#999" stroke="#808080" /></svg><span className="ml-[6px] whitespace-pre">図 面 化</span>
        </button>
      </div>
      <Group title="作成範囲" className="mx-1 mt-[17px] h-[74px]">
        <div className="flex items-center justify-between pt-[2px]"><Radio label="全範囲" checked /><Check label="全階対象" /></div>
        <Radio label="範囲指定" />
        <Radio label="部屋指定" />
      </Group>
      <Group title="エラーチェック" className="mx-1 mt-[13px] h-[60px]">
        <div className="pt-[4px]"><Check label="部屋隙間・重複" checked /><Check label="壁直下率" checked /></div>
      </Group>
      <Group title="壁直下率" className="mx-1 mt-3 h-[119px]">
        <div className="-mr-2 flex items-center pt-[3px]">
          <label htmlFor="compare" className="w-[42px]">比較</label>
          <span className={`relative flex h-[19px] flex-1 bg-white ${SUNKEN}`}>
            <select id="compare" className="w-full appearance-none bg-white pl-1 outline-none"><option>1階 ⇔ 2階</option></select>
            <span className={`pointer-events-none absolute inset-y-0 right-0 flex w-4 items-center justify-center bg-[#d4d0c8] text-[7px] ${RAISED}`}>▼</span>
          </span>
        </div>
        <div className="mt-1 flex"><span className="w-[62px]">直下率</span><span>78.4 %</span></div>
        <div className="-mx-2 mt-[9px] grid grid-cols-3 leading-[13px]"><span>0%</span><span className="text-center">50%</span><span className="text-right">100%</span></div>
        <div className="flex h-1 w-[134px] justify-between">{[0, 1, 2, 3, 4, 5, 6, 7, 8, 9, 10].map((n) => <span key={n} className="w-px bg-[#808080]" />)}</div>
        <div role="progressbar" aria-label="直下率" aria-valuenow={78} className={`h-[11px] w-[135px] ${SUNKEN}`}><div className="h-full bg-[#0000ff]" style={{ width: "78%" }} /></div>
        <p className="mt-[9px] text-center whitespace-nowrap">直下率は60%以上推奨</p>
      </Group>
      <div className="mt-[6px] mb-1 flex gap-[3px] pl-4">
        <button className="h-[21px] w-[69px] border border-black bg-[#d4d0c8] shadow-[inset_1px_1px_0_#fff,inset_-1px_-1px_0_#808080]">OK</button>
        <button className={`h-[21px] w-[69px] ${RAISED}`}>キャンセル</button>
      </div>
    </section>
  );
}

/* ---------- right palette ---------- */

const PALETTE: [string, React.ReactNode][] = [
  ["情報", <path d="M2 3h34v9H2zM7 3v4M11 3v3M15 3v4M19 3v3M23 3v4M27 3v3M31 3v4" strokeWidth="2" />],
  ["通り芯", <><circle cx="9" cy="8" r="7" /><path d="M5 12l4-9 4 9M6 9h6M19 8h5M27 8h4M34 8h4" strokeWidth="2" /></>],
  ["補助点", <path d="M16 5l7 7M23 5l-7 7" strokeWidth="2" />],
  ["線分", <path d="M12 15L27 2" strokeWidth="2" />],
  ["図形", <><circle cx="12" cy="8" r="5.500" strokeWidth="2" /><path d="M22 6h10v9H22z" strokeWidth="2" /></>],
  ["文字", <text x="19" y="13" textAnchor="middle" fontSize="14" fontWeight="700" fill="#666" stroke="none">ABC</text>],
  ["寸法線", <path d="M5 14V4h26v10M3 4h4M29 4h4" strokeWidth="2" />],
  ["ﾊｯﾁﾝｸﾞ", <><path d="M2 2h15v12H2zM2 6h15M2 10h15M7 2v4M12 6v4M7 10v4" strokeWidth="2" /><path d="M27 3l8 7-8 5-6-6zM23 8V2h4v7M35 10v5" /></>],
  ["画像", <><path d="M8 1h22v14H8zM10 3h18v10H10z" strokeWidth="1.200" /><circle cx="21" cy="6" r="2" /><path d="M11 12l4-4 3 3 5-2 4 3" /></>],
  ["2 D", <><path d="M6 2h28M6 14h28M7 2v13M20 2v13M33 2v13" strokeWidth="2" /><circle cx="13" cy="8" r="2.500" fill="#666" /><path d="M24 5h5v6h-5z" fill="#666" /></>],
  ["移動", <><path d="M3 14L13 2v12z" strokeDasharray="2 2" /><path d="M17 5l5 4-5 3z" fill="#666" /><path d="M24 14L34 2v12z" /></>],
  ["複写", <><path d="M3 14L12 2v12z" /><path d="M16 5l5 4-5 3z" fill="#666" /><path d="M21 14L30 2v12zM28 14l8-12v12z" /></>],
  ["線編集", <path d="M13 13L26 3M13 9v4h5M21 3h5v4" />],
  ["変形", <path d="M8 2h9v12H8zM17 2l15 12H17M17 14h8l-3-3" strokeWidth="2" />],
  ["削除", <path d="M12 9l8-7 6 5-8 8h-3zM15 6l6 6" />],
];

function Palette() {
  return (
    <aside className="flex w-[51px] shrink-0 flex-col gap-[2px] border-t border-[#808080] bg-[#f8f8f8] pt-[2px] pl-px">
      {PALETTE.map(([label, art]) => (
        <button key={label} className="flex h-[35px] w-[49px] flex-col items-center border border-[#888] bg-[#fafafa] pt-px text-xs leading-[15px] whitespace-pre shadow-[inset_0_0_0_1px_#d4d0c8]">
          <svg width="38" height="17" className="shrink-0" fill="none" stroke="#666" strokeWidth="1.500" aria-hidden="true">{art}</svg>
          {label}
        </button>
      ))}
    </aside>
  );
}

/* ---------- bottom ---------- */

function Tabs() {
  const tab = "h-5 text-xs leading-4 border border-t-transparent border-l-white border-r-[#505050] border-b-[#505050] bg-[#f0ece0] text-[#666] pr-1";
  return (
    <div className="h-[29px] bg-[#c8c8c8] pt-px">
      <div className="ml-2 mr-[6px] h-1 border-t border-b border-t-white border-b-[#505050]" />
      <div className="flex items-start pl-2">
        <button className={`${tab} w-[99px]`}>1階 平面図</button>
        <button className={`${tab} ml-[2px] w-[110px]`}>1階 天井伏図</button>
        <button className="ml-px h-[22px] w-[101px] border border-[#303030] bg-[#3c3c3c] pr-[6px] text-xs leading-4 text-white">2階 平面図</button>
        <button className={`${tab} w-[111px]`}>2階 天井伏図</button>
        <button aria-label="ウィンドウ一覧" className={`${tab} ml-[2px] flex w-[38px] items-center justify-center`}>
          <svg width="16" height="16" fill="none" stroke="#444c80" aria-hidden="true"><path d="M1 1.500h9M1 3h9M1.500 1v8H5M10 2v3" /><path d="M5.500 6h9v8h-9zM5 7.500h10" /><path d="M9 10h5v4H9z" fill="#888" stroke="none" /></svg>
        </button>
      </div>
    </div>
  );
}

function Status() {
  const pane = "flex h-[19px] items-center justify-center border border-t-white border-l-white border-r-[#505050] border-b-[#505050] pb-px text-[11px] whitespace-pre";
  return (
    <div className="flex h-[27px] gap-px border-t border-t-[#808080] bg-[#d4d0c8] pt-[3px] pr-[3px]">
      <div className={`${pane} flex-1 justify-start! text-[11px]!`}>一括作成:条件を設定してください。</div>
      <div className={`${pane} w-[137px] pl-5`}>0.0:      0.0</div>
      <div className={`${pane} w-[137px]`}>X: 910.0 Y: 910.0</div>
      <div className={`${pane} w-[47px]`}>1/100</div>
      <div className={`${pane} w-[47px]`}>90.0度</div>
      <div className={`${pane} w-[41px]`}>NUM</div>
      <div className={`${pane} w-[41px] text-[#c0bcb4]`}>CAPS</div>
      <div className="flex h-[19px] w-[94px] items-center bg-white px-[3px]">
        <div className="h-[14px] w-full border-2 border-black bg-linear-to-b from-[#686868] via-[#989898] to-[#606060]"><div className="h-full w-[6px] bg-linear-to-b from-[#e0f8c0] to-[#78b838]" /></div>
      </div>
    </div>
  );
}

function Launch({ label, children, framed, active }: Kids & { label: string; framed?: boolean; active?: boolean }) {
  const frame = active ? `bg-white w-12 ${SUNKEN}` : framed ? `w-12 ${RAISED}` : "w-[50px]";
  return <button aria-label={label} className={`flex h-[37px] items-center justify-center ${frame}`}>{children}</button>;
}

function Taskbar() {
  return (
    <footer className="flex h-[42px] items-start border-t border-t-white bg-[#d4d0c8] pt-px">
      <button className={`mt-px ml-[2px] flex h-[37px] w-[62px] items-center text-xs font-bold whitespace-nowrap ${RAISED}`}>
        <svg width="16" height="16" className="shrink-0" aria-hidden="true"><path d="M2 3q3-2 5 0L6 8Q4 6 1 8z" fill="#e05020" /><path d="M8 3q3 2 6 0l-1 5q-3 2-6 0z" fill="#60b030" /><path d="M1 9q3-2 5 0l-1 5q-2-2-5 0z" fill="#3070d0" /><path d="M7 9q3 2 6 0l-1 5q-3 2-6 0z" fill="#f0b820" /></svg>
        <span className="text-[11px]">スタート</span>
      </button>
      <div className="mt-1 ml-[7px] h-8 w-[3px] border-l border-l-white bg-[#a8a49c]" />
      <div className="ml-[6px] flex">
        <Launch label="Chrome">
          <svg width="30" height="30" viewBox="0 0 30 30" aria-hidden="true"><circle cx="15" cy="15" r="14" fill="#f8c820" /><path d="M3 8a14 14 0 0 1 25 2H15a6 6 0 0 0-5 8z" fill="#e04030" /><path d="M3 8a14 14 0 0 0 11 21l6-10a6 6 0 0 1-10-1z" fill="#38a050" /><circle cx="15" cy="15" r="6.500" fill="#fff" /><circle cx="15" cy="15" r="5" fill="#4080e8" /></svg>
        </Launch>
        <Launch label="ブラウザ">
          <svg width="32" height="32" aria-hidden="true"><circle cx="16" cy="16" r="14" fill="#2030a0" /><circle cx="15" cy="14" r="11" fill="#4068c8" /><path d="M7 8q4-4 9-3l-2 4-4 1-1 4-4 1q0-4 2-7zM18 6l5 2 1 5-4 1-3-3zM9 18l6-1 4 4-3 4q-6 0-7-7z" fill="#d8e4f8" /><path d="M3 23Q8 29 19 22 29 14 29 6" stroke="#a0c4f0" strokeWidth="2" fill="none" /></svg>
        </Launch>
        <Launch label="Outlook">
          <svg width="31" height="31" aria-hidden="true"><rect x="1" y="1" width="29" height="29" rx="2" fill="#f4b028" /><rect x="3" y="3" width="25" height="25" fill="#f8cc60" /><circle cx="11" cy="14" r="7" fill="none" stroke="#a05808" strokeWidth="4" /><circle cx="24" cy="15" r="6" fill="#fff" stroke="#c8a060" /><path d="M24 11v4h3" stroke="#555" fill="none" /><path d="M12 20h18v9H12z" fill="#fff" /><path d="M12 20l9 6 9-6" stroke="#c8a060" fill="none" /></svg>
        </Launch>
        <Launch label="PC設定">
          <svg width="32" height="32" aria-hidden="true"><path d="M9 5l13 4v12L9 19z" fill="#333" /><path d="M11 8l9 3v7l-9-1z" fill="#666" /><path d="M2 24l7-5 17 3 1 2-9 5z" fill="#484848" /><path d="M6 24l4-3 11 2-4 3z" fill="#777" /><circle cx="23" cy="9" r="5" fill="none" stroke="#c0c0c0" strokeWidth="4" strokeDasharray="3 1" /></svg>
        </Launch>
        <Launch label="メディア">
          <svg width="32" height="32" aria-hidden="true"><circle cx="16" cy="16" r="15" fill="#58b0e0" /><circle cx="16" cy="16" r="13" fill="#2070a8" /><path d="M4 20Q3 6 16 5t11 12q-2 11-10 13Q7 28 4 20" fill="#8a4418" /><path d="M7 19q0-6 7-4 6-2 7 3 0 9-7 9-7 0-7-8" fill="#f0c898" /><path d="M7 10q8-6 18 0l-1 3q-8-6-17 1z" fill="#f0b020" /><circle cx="11" cy="19" r="1.500" fill="#222" /><circle cx="17" cy="18" r="1.500" fill="#222" /><path d="M11 24q4 2 6-1" stroke="#803010" fill="none" /></svg>
        </Launch>
        <span className="w-px" />
        <Launch label="AT MG" framed><span className="flex h-8 w-8 flex-col bg-[#1488c0] px-[3px] pt-[3px] text-left text-[13px] leading-[13px] font-bold text-white"><span>AT</span><span className="text-[15px]">MG</span></span></Launch>
        <span className="w-[2px]" />
        <Launch label="エクスプローラー" framed>
          <svg width="32" height="30" aria-hidden="true"><path d="M2 3h12l2 3h13v20H2z" fill="#ecc860" /><path d="M4 2h6v4H4z" fill="#30a040" /><path d="M11 3h5v4h-5z" fill="#d04020" /><path d="M22 6h5v3h-5z" fill="#3070d0" /><path d="M2 9h28v16H2z" fill="#f8e098" /><path d="M7 20q9-5 20 0v9h-5v-5H12v5H7z" fill="#70b8e8" stroke="#4088c0" /></svg>
        </Launch>
        <span className="w-[2px]" />
        <Launch label="ARCHITREND ZERO" active><AppMark size={30} /></Launch>
      </div>

      <div className="ml-auto flex h-[38px] items-center">
        <div className="mr-[9px] h-8 w-[3px] border-l border-l-[#888] bg-white" />
        <svg width="18" height="22" aria-hidden="true"><circle cx="8" cy="8" r="7" fill="#e01818" /><path d="M11 2h4v9h-4z" fill="#a07020" /><circle cx="12" cy="16" r="4" fill="#444" /></svg>
        <span className="ml-[9px] flex gap-1 text-base leading-5"><span>A</span><span>般</span></span>
        <svg width="18" height="20" className="ml-1" aria-hidden="true"><path d="M2 9l15 0-2 10H4z" fill="#f0b850" /><path d="M1 2l9 7M5 1l4 8" stroke="#d03020" strokeWidth="2" /><circle cx="13" cy="5" r="4" fill="#c0e0f8" stroke="#5090c0" /></svg>
        <svg width="19" height="18" className="ml-1" aria-hidden="true"><path d="M1 8l10-5 7 3v7l-9 5-8-4z" fill="#e8a850" /><path d="M1 9l8 4 9-5" stroke="#a86820" fill="none" /><path d="M6 4l5-3 3 2" stroke="#a86820" strokeWidth="2" fill="none" /></svg>
        <div className="mr-1 ml-[2px] h-6 w-[2px] border-l border-l-[#888] bg-white" />
        <span className="ml-px flex h-4 w-4 items-center justify-center rounded-full border border-[#8898d0] bg-[#1028a0] text-[11px] font-bold text-white">?</span>
        <div className="mr-[3px] ml-1 h-6 w-[2px] border-l border-l-[#888] bg-white" />
        <span className="flex flex-col text-[8px] leading-[11px] font-bold"><span>CAPS</span><span>KANA</span></span>
        <span className="ml-1 flex flex-col items-center text-[7px] leading-[11px]"><svg width="9" height="9" fill="none" stroke="#000" aria-hidden="true"><path d="M2.500 3V.5h6v4H6M.5 3.500h6v4h-6z" /></svg><span>▼</span></span>
        <div className="ml-1 mr-[3px] flex h-[38px] w-[209px] items-center border border-t-[#808080] border-l-[#808080] border-r-white border-b-white pl-1">
          <svg width="10" height="14" fill="none" stroke="#000" strokeWidth="1.500" aria-hidden="true"><path d="M2 6l3-3 3 3M2 11l3-3 3 3" /></svg>
          <svg width="16" height="16" className="ml-2" aria-hidden="true"><rect width="16" height="16" rx="2" fill="#20c020" /><path d="M3 6h10M3 6l3-3M3 10h10l-3 3" stroke="#fff" strokeWidth="2" fill="none" /></svg>
          <svg width="18" height="18" className="ml-2" fill="#f4f4f4" stroke="#888" aria-hidden="true"><path d="M1 4l4-3 4 3 4-3 4 3-4 3 3 3-4 3-3-2-4 2-4-3 4-3z" /><circle cx="12" cy="13" r="4.500" fill="#20a040" stroke="none" /><path d="M10 13l2 2 3-4" stroke="#fff" fill="none" /></svg>
          <svg width="16" height="18" className="ml-[6px]" fill="#f8f8f8" stroke="#666" aria-hidden="true"><path d="M1 2h8v14H1z" /><path d="M6 5h8v4q0 3-4 3t-4-3zM8 1v4M12 1v4M10 12v4" /></svg>
          <svg width="12" height="16" className="ml-[10px]" fill="#f8f8f8" stroke="#888" aria-hidden="true"><path d="M1 5h3l4-4v14l-4-4H1z" /></svg>
          <time className="ml-4 flex flex-col items-center text-xs leading-4"><span>10:05</span><span>2017/02/09</span></time>
          <svg width="16" height="14" className="ml-auto" aria-hidden="true"><path d="M1 1h14v9H1z" fill="#2870c0" stroke="#185090" /><path d="M2 11h12v2H2z" fill="#334" /></svg>
        </div>
      </div>
    </footer>
  );
}

export default function App() {
  return (
    <div className="flex h-screen min-h-[1080px] w-full flex-col overflow-hidden bg-[#c8c8c8] font-['Liberation_Sans','Noto_Sans_CJK_JP',sans-serif] text-black">
      <TitleAndMenu />
      <div className="h-px bg-[#808080]" />
      <RowOne />
      <RowTwo />
      <Ribbon />
      <div className="flex min-h-0 flex-1">
        <main className="relative min-w-0 flex-1 overflow-hidden bg-[#f0f0f0]">
          <FloorPlan />
          <Dialog />
        </main>
        <Palette />
      </div>
      <Tabs />
      <Status />
      <Taskbar />
    </div>
  );
}
